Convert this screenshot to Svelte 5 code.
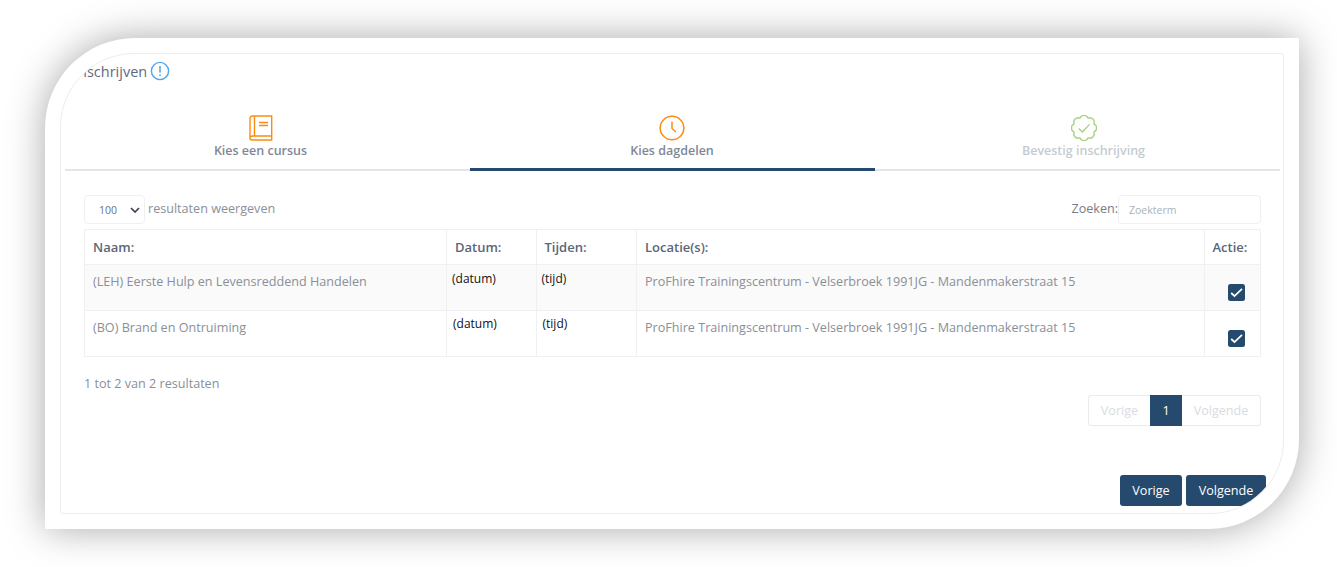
<script>
	const tabs = [
		{ label: 'Kies een cursus', icon: 'book', cls: 'first' },
		{ label: 'Kies dagdelen', icon: 'clock', active: true, cls: 'second' },
		{ label: 'Bevestig inschrijving', icon: 'badge', muted: true, cls: 'third' }
	];

	const rows = [
		{ naam: '(LEH) Eerste Hulp en Levensreddend Handelen', shift: false },
		{ naam: '(BO) Brand en Ontruiming', shift: true }
	];

	const locatie = 'ProFhire Trainingscentrum - Velserbroek 1991JG - Mandenmakerstraat 15';
</script>

<div class="page">
	<div class="frame">
		<div class="card">
			<div class="title">
				<span>Inschrijven</span>
				<svg width="20" height="20" viewBox="0 0 20 20" fill="none">
					<circle cx="10" cy="10" r="8.6" stroke="#4da6ef" stroke-width="1.4" />
					<path d="M10 5v6.6M10 13.6v1.4" stroke="#4da6ef" stroke-width="1.5" />
				</svg>
			</div>

			<div class="tabs">
				{#each tabs as tab}
					<div class="tab {tab.cls}" class:active={tab.active} class:muted={tab.muted}>
						{#if tab.icon === 'book'}
							<svg width="24" height="26" viewBox="0 0 24 26" fill="none" stroke="#fb8c13" stroke-width="1.4">
								<path d="M5.5 1H22.7V21H3.500C2 21 1 22 1 23.200S2 25 3.500 25H22.700V21M1 23.200V3.500C1 2 2 1 3.500 1H5.500V21" />
								<path d="M10 7.500H19M10 10.500H19" />
							</svg>
						{:else if tab.icon === 'clock'}
							<svg width="26" height="26" viewBox="0 0 26 26" fill="none" stroke="#fb8c13" stroke-width="1.5">
								<circle cx="13" cy="13" r="11.800" />
								<path d="M13 6.500V13.500L17 17" />
							</svg>
						{:else}
							<svg width="26" height="26" viewBox="0 0 25 25" fill="none" stroke="#a5d17f" stroke-width="1.3">
								<path d="M16.440 2.980A4.300 4.300 0 0 1 22.020 8.560A4.300 4.300 0 0 1 22.020 16.440A4.300 4.300 0 0 1 16.440 22.020A4.300 4.300 0 0 1 8.560 22.020A4.300 4.300 0 0 1 2.980 16.440A4.300 4.300 0 0 1 2.980 8.560A4.300 4.300 0 0 1 8.560 2.980A4.300 4.300 0 0 1 16.440 2.980Z" />
								<path d="M7.500 13L11 16.300L17.800 9" />
							</svg>
						{/if}
						<div class="tab-label">{tab.label}</div>
					</div>
				{/each}
			</div>

			<div class="controls">
				<div class="length">
					<div class="select">
						<span>100</span>
						<svg width="10" height="6" viewBox="0 0 10 6" fill="none">
							<path d="M1 1l4 4 4-4" stroke="#3a4250" stroke-width="1.700" />
						</svg>
					</div>
					<span>resultaten weergeven</span>
				</div>
				<div class="search">
					<span>Zoeken:</span>
					<div class="search-input">Zoekterm</div>
				</div>
			</div>

			<div class="table">
				<div class="cell head">Naam:</div>
				<div class="cell head">Datum:</div>
				<div class="cell head">Tijden:</div>
				<div class="cell head">Locatie(s):</div>
				<div class="cell head">Actie:</div>

				{#each rows as row, index}
					<div class="cell" class:odd={index === 0}>{row.naam}</div>
					<div class="cell pasted" class:odd={index === 0} class:shift={row.shift}>(datum)</div>
					<div class="cell pasted" class:odd={index === 0} class:shift={row.shift}>(tijd)</div>
					<div class="cell" class:odd={index === 0}>{locatie}</div>
					<div class="cell action" class:odd={index === 0}>
						<svg width="17" height="17" viewBox="0 0 17 17">
							<rect width="17" height="17" rx="2.500" fill="#264a6e" />
							<path d="M3.200 9l3.300 3L14 4.800" fill="none" stroke="#fff" stroke-width="1.700" />
						</svg>
					</div>
				{/each}
			</div>

			<div class="info">1 tot 2 van 2 resultaten</div>

			<div class="pagination">
				<span class="page-btn prev">Vorige</span>
				<span class="page-btn current">1</span>
				<span class="page-btn next">Volgende</span>
			</div>

			<div class="actions">
				<button class="back">Vorige</button>
				<button class="forward">Volgende</button>
			</div>
		</div>
	</div>
</div>

<style>
	:global(body) {
		margin: 0;
		background: #fff;
	}

	.page {
		width: 1337px;
		height: 567px;
		box-sizing: border-box;
		padding: 38px 38px 38px 45px;
		overflow: hidden;
		font-family: 'Open Sans', 'Liberation Sans', sans-serif;
		font-size: 12.600px;
		color: #8a8f98;
	}

	.frame {
		width: 1254px;
		height: 491px;
		box-sizing: border-box;
		padding: 15px;
		background: #fff;
		border-radius: 90px 0 90px 0;
		box-shadow: 0 0 38px rgba(0, 0, 0, 0.34);
	}

	.card {
		height: 461px;
		box-sizing: border-box;
		padding: 0 22px 0 23px;
		border: 1px solid #ebedf0;
		border-radius: 74px 3px 74px 3px;
		overflow: hidden;
		background: #fff;
	}

	.title {
		display: flex;
		align-items: center;
		gap: 3px;
		height: 34px;
		margin-left: -10px;
		font-size: 14.500px;
		color: #5f6b80;
	}

	.tabs {
		display: grid;
		grid-template-columns: repeat(3, 405px);
		height: 54px;
		margin: 27px -19px 0 -19px;
		border-bottom: 2px solid #e4e5e7;
		box-sizing: content-box;
	}

	.tab {
		display: flex;
		flex-direction: column;
		align-items: center;
		height: 53px;
		box-sizing: content-box;
		margin-bottom: -2px;
		border-bottom: 3px solid transparent;
	}

	.tab.first {
		padding-right: 14px;
		width: 391px;
	}

	.tab.second {
		padding-right: 1px;
		width: 404px;
	}

	.tab.third {
		padding-left: 12px;
		width: 393px;
	}

	.tab.active {
		border-bottom-color: #264a6e;
	}

	.tab svg {
		display: block;
	}

	.tab-label {
		margin-top: 1px;
		font-weight: 600;
		font-size: 12.500px;
		line-height: 18px;
		color: #7f8896;
	}

	.tab.muted .tab-label {
		color: #c6cbd0;
	}

	.controls {
		display: flex;
		justify-content: space-between;
		align-items: flex-start;
		height: 34px;
		margin-top: 24px;
	}

	.length,
	.search {
		display: flex;
		align-items: center;
		line-height: 16px;
	}

	.length {
		gap: 3px;
	}

	.length > span {
		margin-top: -2px;
	}

	.search > span {
		margin-top: -2px;
		color: #777c85;
	}

	.select {
		display: flex;
		align-items: center;
		justify-content: space-between;
		width: 61px;
		height: 29px;
		box-sizing: border-box;
		padding: 0 4px 0 14px;
		border: 1px solid #eef0f2;
		border-radius: 4px;
		font-size: 10.500px;
		color: #6b7280;
	}

	.search-input {
		width: 143px;
		height: 29px;
		box-sizing: border-box;
		padding: 0 10px;
		border: 1px solid #eef0f2;
		border-radius: 4px;
		font-size: 10.500px;
		line-height: 28px;
		color: #adb2ba;
	}

	.table {
		display: grid;
		grid-template-columns: 362px 89.500px 100.500px 567.500px 56.500px;
		grid-template-rows: 35px 46px 46px;
		width: 1177px;
		border-top: 1px solid #eff0f2;
		border-left: 1px solid #eff0f2;
		box-sizing: border-box;
	}

	.cell {
		padding: 8px 8px 0;
		border-right: 1px solid #eff0f2;
		border-bottom: 1px solid #eff0f2;
		box-sizing: border-box;
		line-height: 18px;
		white-space: nowrap;
		overflow: hidden;
	}

	.head {
		font-size: 13px;
		font-weight: 600;
		color: #5b6679;
	}

	.odd {
		background: #fafafa;
	}

	.pasted {
		padding: 5px 0 0 5px;
		font-size: 12px;
		color: #111;
	}

	.pasted.shift {
		padding: 4px 0 0 6px;
	}

	.action {
		display: flex;
		justify-content: flex-end;
		padding: 19px 15px 0 0;
	}

	.info {
		margin-top: 18px;
		line-height: 18px;
	}

	.pagination {
		display: flex;
		justify-content: flex-end;
		height: 31px;
		margin-top: 2px;
	}

	.page-btn {
		box-sizing: border-box;
		border: 1px solid #e9ebee;
		line-height: 29px;
		text-align: center;
		color: #d9dcdf;
	}

	.prev {
		width: 62px;
		border-radius: 3px 0 0 3px;
		border-right: 0;
	}

	.next {
		width: 79px;
		border-radius: 0 3px 3px 0;
		border-left: 0;
	}

	.current {
		width: 32px;
		border: 0;
		background: #264a6e;
		color: #fff;
		line-height: 31px;
	}

	.actions {
		display: flex;
		justify-content: flex-end;
		gap: 4px;
		margin-top: 49px;
		margin-right: -5px;
	}

	button {
		height: 31px;
		padding: 0;
		border: 0;
		border-radius: 3px;
		background: #264a6e;
		color: #fff;
		font: 500 12.600px 'Open Sans', 'Liberation Sans', sans-serif;
	}

	.back {
		width: 62px;
	}

	.forward {
		width: 80px;
	}
</style>
